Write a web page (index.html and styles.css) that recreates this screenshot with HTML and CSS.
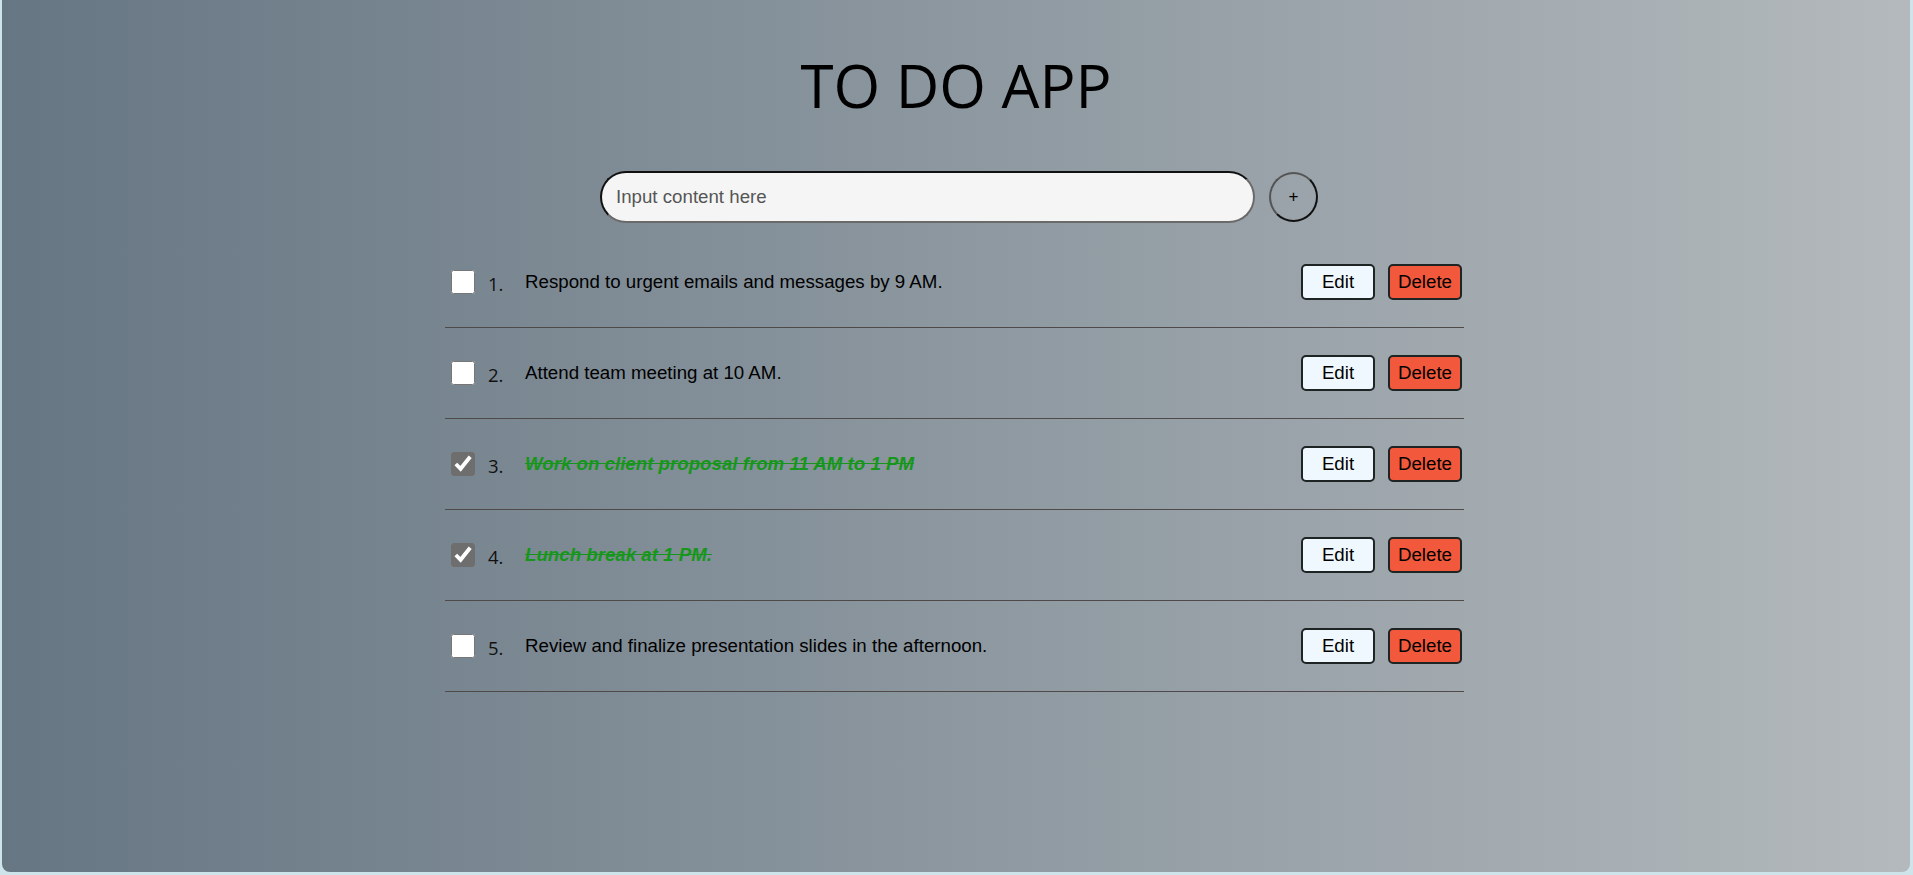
FILE: index.html
```html
<!DOCTYPE html>
<html lang="en">
<head>
<meta charset="utf-8">
<title>To Do App</title>
<link rel="stylesheet" href="styles.css">
</head>
<body>
<div class="app">
  <h1 class="title">TO DO APP</h1>
  <div class="composer">
    <input class="composer-input" type="text" placeholder="Input content here">
    <button class="add-btn">+</button>
  </div>
  <ul class="todo-list">
    <li class="todo">
      <input class="todo-check" type="checkbox">
      <span class="todo-num">1.</span>
      <span class="todo-text">Respond to urgent emails and messages by 9 AM.</span>
      <div class="todo-actions"><button class="btn btn-edit">Edit</button><button class="btn btn-delete">Delete</button></div>
    </li>
    <li class="todo">
      <input class="todo-check" type="checkbox">
      <span class="todo-num">2.</span>
      <span class="todo-text">Attend team meeting at 10 AM.</span>
      <div class="todo-actions"><button class="btn btn-edit">Edit</button><button class="btn btn-delete">Delete</button></div>
    </li>
    <li class="todo">
      <input class="todo-check" type="checkbox" checked>
      <span class="todo-num">3.</span>
      <span class="todo-text done">Work on client proposal from 11 AM to 1 PM</span>
      <div class="todo-actions"><button class="btn btn-edit">Edit</button><button class="btn btn-delete">Delete</button></div>
    </li>
    <li class="todo">
      <input class="todo-check" type="checkbox" checked>
      <span class="todo-num">4.</span>
      <span class="todo-text done">Lunch break at 1 PM.</span>
      <div class="todo-actions"><button class="btn btn-edit">Edit</button><button class="btn btn-delete">Delete</button></div>
    </li>
    <li class="todo">
      <input class="todo-check" type="checkbox">
      <span class="todo-num">5.</span>
      <span class="todo-text">Review and finalize presentation slides in the afternoon.</span>
      <div class="todo-actions"><button class="btn btn-edit">Edit</button><button class="btn btn-delete">Delete</button></div>
    </li>
  </ul>
</div>
</body>
</html>
```

FILE: styles.css
```css
html, body {
  margin: 0;
  padding: 0;
  height: 100%;
}

body {
  background: #cde5ea;
  font-family: "Liberation Sans", Arial, sans-serif;
  overflow: hidden;
}

.app {
  box-sizing: border-box;
  height: calc(100vh - 3px);
  margin: 0 3px 0 2px;
  padding-top: 45px;
  border-radius: 0 0 8px 8px;
  background: linear-gradient(to right, #667683, #b3b9bc);
}

.title {
  margin: 0;
  text-align: center;
  font-family: "Open Sans", "Noto Sans", sans-serif;
  font-weight: 400;
  font-size: 60px;
  line-height: 80px;
  color: #000;
}

.composer {
  display: flex;
  justify-content: center;
  align-items: center;
  gap: 14px;
  margin-top: 46px;
  padding-left: 6px;
}

.composer-input {
  box-sizing: border-box;
  width: 655px;
  height: 52px;
  padding: 0 14px;
  border-style: solid;
  border-width: 2px;
  border-color: #111 #6a6a6a #6a6a6a #111;
  border-radius: 26px;
  background: #f5f5f5;
  font-family: "Liberation Sans", Arial, sans-serif;
  font-size: 18.7px;
  color: #222;
  outline: none;
}

.composer-input::placeholder {
  color: #555;
}

.add-btn {
  box-sizing: border-box;
  width: 49px;
  height: 50px;
  padding: 0;
  border-style: solid;
  border-width: 2px;
  border-color: #555 #111 #111 #555;
  border-radius: 50%;
  background: transparent;
  font-family: "Liberation Sans", Arial, sans-serif;
  font-size: 17px;
  color: #000;
}

.todo-list {
  list-style: none;
  width: 1019px;
  margin: 14px 0 0 calc(50% - 511px);
  padding: 0;
}

.todo {
  display: flex;
  align-items: center;
  height: 90px;
  padding: 0 2px 0 6px;
  border-bottom: 1px solid #4f4a4a;
}

.todo-check {
  width: 24px;
  height: 24px;
  margin: 0 13px 0 0;
  accent-color: #6e6e6e;
}

.todo-num {
  width: 37px;
  margin-top: 3px;
  font-family: "Open Sans", "Noto Sans", sans-serif;
  font-size: 18.5px;
  color: #111;
}

.todo-text {
  flex: 1;
  font-size: 18.7px;
  color: #000;
}

.todo-text.done {
  color: #16961a;
  font-style: italic;
  font-weight: 700;
  text-decoration: line-through;
}

.todo-actions {
  display: flex;
  gap: 13px;
}

.btn {
  box-sizing: border-box;
  width: 74px;
  height: 36px;
  padding: 0;
  border: 2px solid #1e2424;
  border-radius: 5px;
  font-family: "Liberation Sans", Arial, sans-serif;
  font-size: 18.7px;
  color: #000;
}

.btn-edit {
  background: #f0f8ff;
}

.btn-delete {
  background: #f2583b;
}
```
